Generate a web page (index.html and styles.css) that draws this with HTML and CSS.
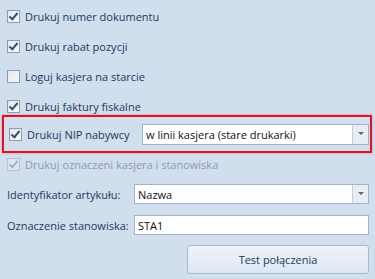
FILE: index.html
```html
<!DOCTYPE html>
<html lang="pl">
<head>
    <meta charset="UTF-8">
    <meta name="viewport" content="width=device-width, initial-scale=1.0">
    <title>Ustawienia drukarki fiskalnej</title>
    <link rel="stylesheet" href="styles.css">
</head>
<body>
    <main class="panel">
        <div class="options">
            <label class="check-row">
                <span class="box checked"></span>
                <span>Drukuj numer dokumentu</span>
            </label>
            <label class="check-row">
                <span class="box checked"></span>
                <span>Drukuj rabat pozycji</span>
            </label>
            <label class="check-row">
                <span class="box"></span>
                <span>Loguj kasjera na starcie</span>
            </label>
            <label class="check-row">
                <span class="box checked"></span>
                <span>Drukuj faktury fiskalne</span>
            </label>

            <div class="highlight">
                <label class="check-row nip">
                    <span class="box checked"></span>
                    <span>Drukuj NIP nabywcy</span>
                </label>
                <div class="select nip-select">
                    <span class="value">w linii kasjera (stare drukarki)</span>
                    <span class="arrow"></span>
                </div>
            </div>

            <label class="check-row disabled">
                <span class="box checked"></span>
                <span>Drukuj oznaczeni kasjera i stanowiska</span>
            </label>
        </div>

        <div class="field-row first">
            <span class="field-label">Identyfikator artykułu:</span>
            <div class="select">
                <span class="value">Nazwa</span>
                <span class="arrow"></span>
            </div>
        </div>
        <div class="field-row">
            <span class="field-label">Oznaczenie stanowiska:</span>
            <div class="input"><span class="value">STA1</span></div>
        </div>

        <div class="actions">
            <button class="btn">Test połączenia</button>
        </div>
    </main>
</body>
</html>
```

FILE: styles.css
```css
body {
    margin: 0;
    padding: 0;
    background-color: #d1deee;
    font-family: "Open Sans", "Noto Sans", sans-serif;
    font-size: 11px;
    color: #1e395b;
    width: 375px;
    height: 279px;
    overflow: hidden;
}

.panel {
    display: flex;
    flex-direction: column;
}

.options {
    display: flex;
    flex-direction: column;
    padding-top: 7px;
}

.check-row {
    display: flex;
    align-items: center;
    height: 18px;
    margin-top: 12px;
    padding-left: 7px;
    white-space: nowrap;
}

.check-row:first-child {
    margin-top: 0;
}

.box {
    width: 11px;
    height: 11px;
    border: 1px solid #8e9bb0;
    background: linear-gradient(135deg, #e3e8ee 0%, #f7f9fb 100%);
    margin-right: 5px;
    position: relative;
    flex-shrink: 0;
}

.box.checked::after {
    content: "";
    position: absolute;
    left: 3px;
    top: 0px;
    width: 3px;
    height: 7px;
    border: solid #3b4e6b;
    border-width: 0 2px 2px 0;
    transform: rotate(40deg);
}

.check-row.disabled {
    margin-top: 2px;
    color: #8e9cae;
}

.check-row.disabled .box {
    border-color: #b9c3d0;
    background: #dde5ee;
}

.check-row.disabled .box.checked::after {
    border-color: #a9b4c2;
}

.highlight {
    display: flex;
    align-items: center;
    margin-left: 2px;
    width: 366px;
    height: 34px;
    border: 2px solid #e5121d;
    box-shadow: 0 0 2px rgba(229, 18, 29, 0.4);
}

.highlight .check-row {
    margin-top: 0;
    padding-left: 5px;
    width: 130px;
}

.select,
.input {
    display: flex;
    align-items: center;
    height: 18px;
    background-color: #fff;
    border: 1px solid #a2b3c9;
    color: #111;
    font-size: 12px;
    flex: 1;
}

.value {
    flex: 1;
    padding-left: 3px;
    white-space: nowrap;
}

.arrow {
    width: 15px;
    height: 100%;
    border-left: 1px solid #c3cfdd;
    background-color: #e9eef5;
    position: relative;
}

.arrow::after {
    content: "";
    position: absolute;
    left: 5px;
    top: 7px;
    border-left: 3px solid transparent;
    border-right: 3px solid transparent;
    border-top: 3px solid #596a80;
}

.nip-select {
    flex: none;
    width: 225px;
    height: 19px;
    margin-left: 3px;
    font-size: 11px;
}

.field-row {
    display: flex;
    align-items: center;
    margin-top: 11px;
    padding-left: 7px;
    padding-right: 6px;
}

.field-row .select,
.field-row .input {
    font-size: 11px;
}

.field-label {
    width: 127px;
    white-space: nowrap;
}

.actions {
    display: flex;
    justify-content: flex-end;
    padding-right: 6px;
    margin-top: 10px;
}

.btn {
    width: 182px;
    height: 29px;
    font-family: inherit;
    font-size: 11px;
    color: #1e395b;
    border: 1px solid #a9b8cb;
    border-radius: 3px;
    background: linear-gradient(#eef3f9, #dde7f3);
    padding: 0;
}
```
